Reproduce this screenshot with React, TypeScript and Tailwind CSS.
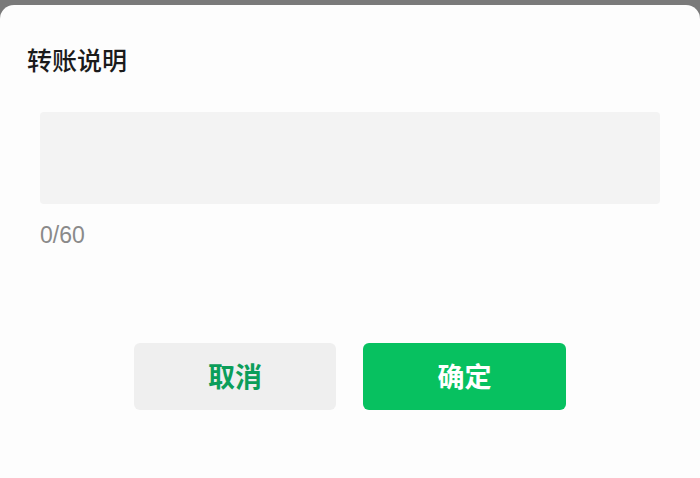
export default function App() {
  return (
    <div
      className="w-[700px] h-[478px] bg-[#7a7a7a] pt-[5px] overflow-hidden"
      style={{ fontFamily: '"Noto Sans CJK SC", "Noto Sans", sans-serif' }}
    >
      <div className="h-full bg-[#fdfdfd] rounded-t-[14px] flex flex-col">
        {/* Title */}
        <div className="pl-[27px] pt-[37px] text-[25px] leading-[34px] font-medium text-[#1b1b1b]">
          转账说明
        </div>

        {/* Note input */}
        <div className="mx-[40px] mt-[36px] h-[92px] bg-[#f3f3f3] rounded-[4px]" />
        <div
          className="pl-[40px] mt-[18px] text-[23px] leading-[26px] text-[#8a8a8a]"
          style={{ fontFamily: '"Liberation Sans", Arial, sans-serif' }}
        >
          0/60
        </div>

        {/* Actions */}
        <div className="flex justify-center gap-[27px] mt-[95px]">
          <button className="w-[202px] h-[67px] rounded-[6px] bg-[#efefef] text-[#0b9e5a] text-[27px] font-bold">
            取消
          </button>
          <button className="w-[203px] h-[67px] rounded-[6px] bg-[#07c160] text-white text-[27px] font-bold">
            确定
          </button>
        </div>
      </div>
    </div>
  );
}
